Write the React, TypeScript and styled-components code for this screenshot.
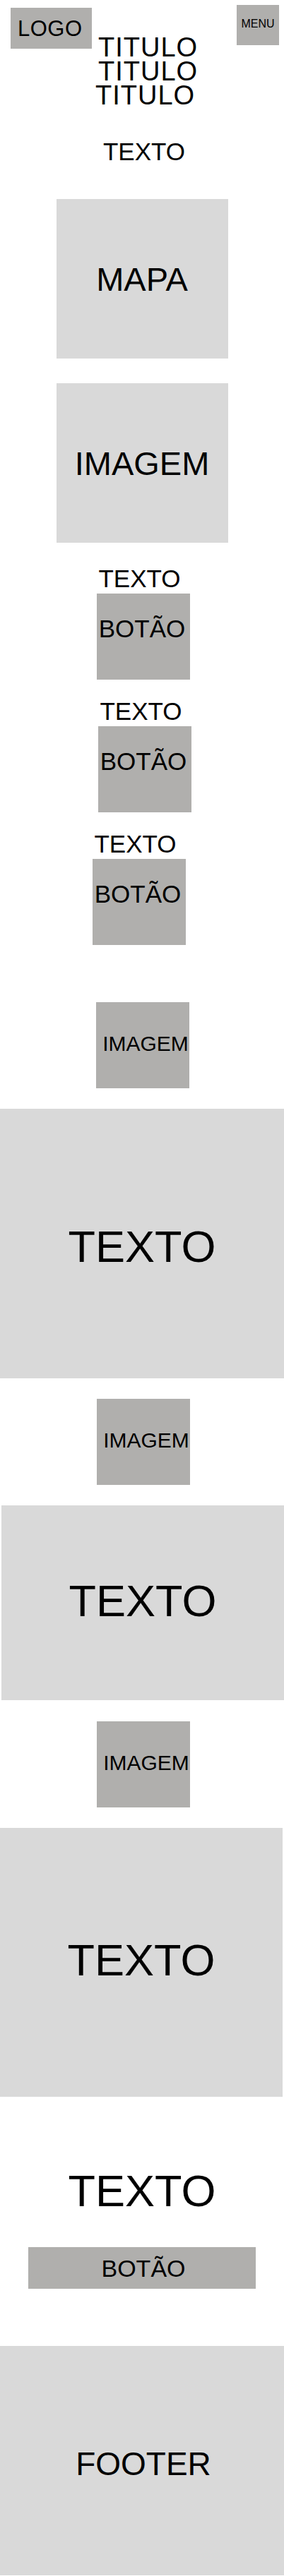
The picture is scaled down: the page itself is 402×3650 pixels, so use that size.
import React from "react";
import styled, { createGlobalStyle } from "styled-components";

const GlobalStyle = createGlobalStyle`
  * {
    box-sizing: border-box;
  }

  html,
  body {
    margin: 0;
    padding: 0;
    background: #ffffff;
  }

  body {
    font-family: "Liberation Sans", Arial, sans-serif;
    color: #000000;
  }
`;

const DARK = "#b0afad";
const LIGHT = "#d9d9d9";

const Page = styled.div`
  width: 402px;
  display: flex;
  flex-direction: column;
  overflow: hidden;
`;

const Header = styled.header`
  display: grid;
  grid-template-columns: 1fr auto 1fr;
  align-items: start;
  height: 152px;
`;

const Logo = styled.div`
  justify-self: start;
  margin: 11px 0 0 15px;
  width: 115px;
  height: 58px;
  background: ${DARK};
  display: flex;
  align-items: center;
  padding-left: 10px;
  font-size: 31px;
  line-height: 1;
  letter-spacing: 0.5px;
`;

const Menu = styled.button`
  justify-self: end;
  margin: 7px 7px 0 0;
  width: 60px;
  height: 57px;
  border: none;
  padding: 0 0 4px;
  background: ${DARK};
  font-family: inherit;
  font-size: 16px;
  line-height: 1;
  color: #000;
`;

const Title = styled.h1`
  margin: 50px 0 0;
  padding-left: 5px;
  display: flex;
  flex-direction: column;
  align-items: center;
  font-size: 38px;
  font-weight: 400;
  line-height: 34px;
  letter-spacing: 1px;
`;

const TitleLine = styled.span<{ $shift?: number }>`
  margin-right: ${(p) => (p.$shift ? p.$shift * 2 : 0)}px;
`;

const Lead = styled.p`
  margin: 45px 0 0;
  text-align: center;
  padding-left: 6px;
  font-size: 35px;
  line-height: 1;
`;

const Panel = styled.div<{ $top: number }>`
  margin: ${(p) => p.$top}px auto 0;
  width: 243px;
  height: 226px;
  background: ${LIGHT};
  display: flex;
  align-items: center;
  justify-content: center;
  font-size: 47px;
  line-height: 1;
`;

const Group = styled.div<{ $shift: number; $top: number }>`
  margin: ${(p) => p.$top}px 0 0 calc(50% - 66px + ${(p) => p.$shift}px);
  width: 132px;
  display: flex;
  flex-direction: column;
  align-items: center;
  gap: 4px;
`;

const GroupText = styled.p`
  margin: 0;
  padding-right: 11px;
  font-size: 35px;
  line-height: 1;
  white-space: nowrap;
`;

const SquareButton = styled.button`
  width: 132px;
  height: 122px;
  border: none;
  background: ${DARK};
  padding: 32px 4px 0 0;
  display: flex;
  justify-content: center;
  align-items: flex-start;
  font-family: inherit;
  font-size: 35px;
  line-height: 1;
  color: #000;
`;

const Thumb = styled.div<{ $top: number; $shift?: number }>`
  margin: ${(p) => p.$top}px 0 0 calc(50% - 66px + ${(p) => p.$shift ?? 0}px);
  width: 132px;
  height: 122px;
  background: ${DARK};
  display: flex;
  align-items: center;
  justify-content: center;
  padding: 0 0 4px 8px;
  font-size: 30px;
  line-height: 1;
`;

const Band = styled.section<{ $height: number; $inset?: number; $lift?: number }>`
  margin: 29px 0 0 ${(p) => (p.$inset && p.$inset > 0 ? p.$inset : 0)}px;
  width: ${(p) => 402 - Math.abs(p.$inset ?? 0)}px;
  height: ${(p) => p.$height}px;
  background: ${LIGHT};
  display: flex;
  align-items: center;
  justify-content: center;
  padding-bottom: ${(p) => (p.$lift ?? 0) * 2}px;
  padding-top: ${(p) => (p.$lift && p.$lift < 0 ? -p.$lift * 2 : 0)}px;
  font-size: 63px;
  line-height: 1;
`;

const Closing = styled.section`
  margin-top: 102px;
  display: flex;
  flex-direction: column;
  align-items: center;
  gap: 48px;
`;

const ClosingText = styled.p`
  margin: 0;
  font-size: 63px;
  line-height: 1;
`;

const WideButton = styled.button`
  width: 322px;
  height: 59px;
  border: none;
  background: ${DARK};
  padding: 0 0 0 4px;
  font-family: inherit;
  font-size: 34px;
  line-height: 1;
  color: #000;
`;

const Footer = styled.footer`
  margin-top: 81px;
  height: 325px;
  background: ${LIGHT};
  display: flex;
  align-items: center;
  justify-content: center;
  padding: 8px 0 0 4px;
  font-size: 46px;
  line-height: 1;
`;

const groups = [
  { shift: 2, top: 33 },
  { shift: 4, top: 27 },
  { shift: -4, top: 27 },
];

export default function App() {
  return (
    <>
      <GlobalStyle />
      <Page>
        <Header>
          <Logo>LOGO</Logo>
          <Title>
            <TitleLine>TITULO</TitleLine>
            <TitleLine>TITULO</TitleLine>
            <TitleLine $shift={4}>TITULO</TitleLine>
          </Title>
          <Menu>MENU</Menu>
        </Header>

        <Lead>TEXTO</Lead>

        <Panel $top={50}>MAPA</Panel>
        <Panel $top={35}>IMAGEM</Panel>

        {groups.map((g, i) => (
          <Group key={i} $shift={g.shift} $top={g.top}>
            <GroupText>TEXTO</GroupText>
            <SquareButton>BOTÃO</SquareButton>
          </Group>
        ))}

        <Thumb $top={81} $shift={1}>IMAGEM</Thumb>
        <Band $height={382} $lift={-4}>TEXTO</Band>

        <Thumb $top={29} $shift={2}>IMAGEM</Thumb>
        <Band $height={276} $inset={2} $lift={3}>TEXTO</Band>

        <Thumb $top={30} $shift={2}>IMAGEM</Thumb>
        <Band $height={381} $inset={-2} $lift={3}>TEXTO</Band>

        <Closing>
          <ClosingText>TEXTO</ClosingText>
          <WideButton>BOTÃO</WideButton>
        </Closing>

        <Footer>FOOTER</Footer>
      </Page>
    </>
  );
}
